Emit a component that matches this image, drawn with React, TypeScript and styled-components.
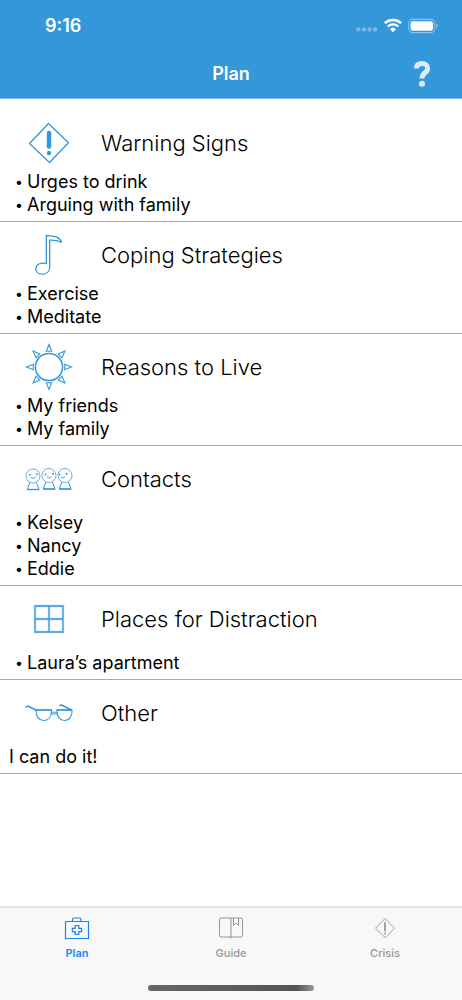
import React from "react";
import styled, { createGlobalStyle } from "styled-components";

const BLUE = "#3497da";

const GlobalStyle = createGlobalStyle`
  *, *::before, *::after { box-sizing: border-box; }
  body {
    margin: 0;
    background: #fff;
    color: #000;
    font-family: Inter, "Liberation Sans", sans-serif;
  }
`;

const Screen = styled.div`
  min-height: 100vh;
  display: flex;
  flex-direction: column;
`;

const TopBar = styled.header`
  background: ${BLUE};
  color: #fff;
  border-bottom: 1px solid #86b6d9;
`;

const StatusBar = styled.div`
  height: 50px;
  padding: 2px 24px 0 45px;
  display: flex;
  align-items: center;
  justify-content: space-between;
`;

const Clock = styled.time`
  font-size: 18px;
  line-height: 24px;
  font-weight: 600;
`;

const StatusIcons = styled.div`
  display: flex;
  align-items: center;
`;

const NavBar = styled.div`
  height: 48px;
  padding: 0 24px;
  display: grid;
  grid-template-columns: 1fr auto 1fr;
  align-items: center;
`;

const PageTitle = styled.h1`
  grid-column: 2;
  margin: 0;
  font-size: 18px;
  line-height: 24px;
  font-weight: 600;
`;

const HelpButton = styled.button`
  justify-self: end;
  width: 32px;
  height: 40px;
  padding: 0;
  display: flex;
  align-items: center;
  justify-content: center;
  border: 0;
  background: none;
  color: #dbebf8;
  cursor: pointer;
`;

const Sections = styled.main`
  flex: 1;
  padding-top: 11px;
`;

const Section = styled.section`
  padding: 9px 9px 5px;
  border-bottom: 1px solid #ababab;
`;

const SectionHeader = styled.div<{ $roomy?: boolean }>`
  display: flex;
  align-items: center;
  gap: 12px;
  margin-bottom: ${(p) => (p.$roomy ? 9 : 4)}px;
`;

const IconBox = styled.div`
  width: 80px;
  height: 48px;
  display: flex;
  align-items: center;
  justify-content: center;
`;

const SectionTitle = styled.h2`
  margin: 0;
  font-size: 22px;
  line-height: 32px;
  font-weight: 300;
`;

const Items = styled.ul`
  margin: 0;
  padding: 0 0 0 6px;
  display: grid;
  gap: 1px;
  list-style: none;
  font-size: 18px;
  line-height: 22px;
`;

const Item = styled.li`
  display: flex;
  gap: 4px;
  &::before {
    content: "•";
    width: 8px;
    font-size: 14px;
  }
`;

const Note = styled.p`
  margin: 0;
  font-size: 18px;
  line-height: 22px;
`;

const BottomBar = styled.footer`
  background: #f8f8f8;
  border-top: 2px solid #e6e6e6;
`;

const Tabs = styled.nav`
  display: grid;
  grid-template-columns: repeat(3, 1fr);
  height: 77px;
`;

const Tab = styled.a<{ $active?: boolean }>`
  padding-top: 8px;
  display: flex;
  flex-direction: column;
  align-items: center;
  gap: 5px;
  text-decoration: none;
  font-size: 11px;
  line-height: 16px;
  font-weight: ${(p) => (p.$active ? 600 : 500)};
  color: ${(p) => (p.$active ? "#1a85f7" : "#969696")};
`;

const HomeIndicator = styled.div`
  width: 36%;
  height: 6px;
  margin: 0 auto 9px;
  border-radius: 3px;
  background: linear-gradient(90deg, #666, #555 90%, #999);
`;

const Signal = () => (
  <svg width="22" height="16" viewBox="0 0 22 16" fill="#79b9e8">
    {[0, 1, 2, 3].map((i) => (
      <rect key={i} x={0.3 + i * 5.6} y="9.5" width="4" height="4" rx="1.4" />
    ))}
  </svg>
);

const Wifi = () => (
  <svg width="30" height="16" viewBox="0 0 30 16" fill="none" stroke="#fff" strokeWidth="2.3">
    <path d="M6.8 5.1a12.4 12.4 0 0 1 16.400 0" />
    <path d="M9.700 8.500a7.800 7.800 0 0 1 10.600 0" />
    <path d="M12 11.200a4.3 4.3 0 0 1 6 0L15 14.300z" fill="#fff" stroke="none" />
  </svg>
);

const Battery = () => (
  <svg width="30" height="16" viewBox="0 0 30 16">
    <rect x="0.8" y="1.4" width="26" height="13.2" rx="4" fill="none" stroke="#8bc3ec" strokeWidth="1.1" />
    <rect x="2.6" y="3.2" width="22.4" height="9.6" rx="2.4" fill="#fff" />
    <path d="M28.2 5.6q1.6 1 1.6 2.4t-1.6 2.4z" fill="#8bc3ec" />
  </svg>
);

const Question = () => (
  <svg width="18" height="28" viewBox="0 0 18 28" fill="none">
    <path d="M3.3 8.6C3.3 5.200 5.600 3.600 9 3.600s5.700 1.700 5.700 4.800C14.700 12.700 9 12.500 9 18.600" stroke="currentColor" strokeWidth="5" />
    <circle cx="9" cy="23.700" r="3" fill="currentColor" />
  </svg>
);

const WarningIcon = () => (
  <svg width="42" height="42" viewBox="0 0 42 42" fill="none" stroke={BLUE} strokeLinejoin="round">
    <path d="M20.500 1.500L40.500 20.800L21.500 40.500L1.500 21.500z" strokeWidth="1.3" />
    <path d="M21 11v13.500" strokeWidth="4.400" strokeLinecap="round" />
    <circle cx="21" cy="31" r="2.200" fill={BLUE} stroke="none" />
  </svg>
);

const NoteIcon = () => (
  <svg width="42" height="42" viewBox="0 0 42 42" fill="none" stroke={BLUE} strokeWidth="1.300" strokeLinejoin="round">
    <path d="M18.300 29.600V1.500C23 2.300 31.500 1.200 33.500 8.400C29.500 6 25.500 6.200 21.700 6V33C21.700 37.500 18.500 40.200 14.300 40.200S7.800 37.800 7.800 34.700C7.800 30.800 12.500 27.800 18.300 29.600z" />
  </svg>
);

const SunIcon = () => (
  <svg width="48" height="48" viewBox="0 0 48 48" fill="none" stroke={BLUE}>
    <circle cx="24" cy="24" r="13.600" strokeWidth="1.500" />
    {[0, 45, 90, 135, 180, 225, 270, 315].map((a) => (
      <path key={a} d="M24 1.500L26.700 8.300H21.300z" strokeWidth="1.100" transform={`rotate(${a} 24 24)`} />
    ))}
  </svg>
);

const PeopleIcon = () => (
  <svg width="48" height="24" viewBox="0 0 48 24" fill="none" stroke={BLUE} strokeWidth="1">
    {[0, 1, 2].map((i) => (
      <g key={i} transform={`translate(${i * 16} ${i === 0 ? 0.5 : 0})`}>
        <circle cx="8" cy="8.500" r="7" strokeOpacity=".75" />
        <path d="M4.800 15L2.300 22H14L11.500 15" />
        <path d="M2.300 22H14" strokeWidth="1.400" />
        <g transform={`translate(${i === 2 ? -2.5 : 0} 0)`}>
          <circle cx={i === 1 ? 4.500 : 5} cy="7.500" r=".9" fill={BLUE} stroke="none" />
          <circle cx="12" cy="6.800" r="1" fill={BLUE} stroke="none" />
          <path d="M6 9.500q2.500 3 4.500-.2" />
        </g>
      </g>
    ))}
  </svg>
);

const WindowIcon = () => (
  <svg width="32" height="30" viewBox="0 0 32 30" fill="none">
    <path d="M2 2H30V28H2zM16 2V28M2 15H30" stroke="#d3eafb" strokeWidth="3" />
    <path d="M2 2H30V28H2zM16 2V28M2 15H30" stroke={BLUE} strokeWidth="1.300" />
  </svg>
);

const GlassesIcon = () => (
  <svg width="48" height="20" viewBox="0 0 48 20" fill="none" stroke={BLUE} strokeWidth="1.100" strokeLinecap="round" strokeLinejoin="round">
    <path d="M1 4L2.500 3L10.500 6.800M46.500 7L36.500 2L35 2.500" strokeWidth="1.500" />
    <path d="M11 7H26.500V9C26 14 23 17.500 19 17.500C14 17.500 11 13.500 11 7z" />
    <path d="M32 7H47C47.500 13 44.500 17.500 39.500 17.500C35 17.500 32 14 32 7z" />
    <path d="M10.500 7H26.500M32 7H46.500" strokeWidth="1.600" />
    <path d="M26.500 9.300H32M26.500 11H32" />
  </svg>
);

const KitIcon = () => (
  <svg width="26" height="24" viewBox="0 0 26 24" fill="none" stroke="currentColor" strokeWidth="1.200">
    <path d="M1.500 5.500H24.500V22.500H1.500zM8.500 5.500V3.500Q8.500 2 10 2H15.500Q17 2 17 3.500V5.500" />
    <path d="M11.200 9.500H14.800V12.300H17.600V15.700H14.800V18.500H11.200V15.700H8.400V12.300H11.200z" />
  </svg>
);

const BookIcon = () => (
  <svg width="26" height="24" viewBox="0 0 26 24" fill="none" stroke="currentColor" strokeWidth="1">
    <rect x="1.500" y="2" width="23" height="19" rx="1.500" />
    <path d="M13 2V22.500M15.500 2V9.500L18 7L20.500 9.500V2" />
  </svg>
);

const CrisisIcon = () => (
  <svg width="26" height="24" viewBox="0 0 26 24" fill="none" stroke="currentColor">
    <path d="M13 2.500L22.500 12.200L13.200 21.700L3.500 12.200z" strokeWidth=".9" />
    <path d="M13 7V14.500" strokeWidth="1.800" strokeLinecap="round" />
    <circle cx="13" cy="17.500" r="1" fill="currentColor" stroke="none" />
  </svg>
);

type Entry = { title: string; icon: React.ReactNode; items?: string[]; note?: string; roomy?: boolean };

const plan: Entry[] = [
  { title: "Warning Signs", icon: <WarningIcon />, items: ["Urges to drink", "Arguing with family"] },
  { title: "Coping Strategies", icon: <NoteIcon />, items: ["Exercise", "Meditate"] },
  { title: "Reasons to Live", icon: <SunIcon />, items: ["My friends", "My family"] },
  { title: "Contacts", icon: <PeopleIcon />, items: ["Kelsey", "Nancy", "Eddie"], roomy: true },
  { title: "Places for Distraction", icon: <WindowIcon />, items: ["Laura’s apartment"], roomy: true },
  { title: "Other", icon: <GlassesIcon />, note: "I can do it!", roomy: true },
];

export default function App() {
  return (
    <Screen>
      <GlobalStyle />
      <TopBar>
        <StatusBar>
          <Clock>9:16</Clock>
          <StatusIcons>
            <Signal />
            <Wifi />
            <Battery />
          </StatusIcons>
        </StatusBar>
        <NavBar>
          <PageTitle>Plan</PageTitle>
          <HelpButton aria-label="Help">
            <Question />
          </HelpButton>
        </NavBar>
      </TopBar>
      <Sections>
        {plan.map((s) => (
          <Section key={s.title}>
            <SectionHeader $roomy={s.roomy}>
              <IconBox>{s.icon}</IconBox>
              <SectionTitle>{s.title}</SectionTitle>
            </SectionHeader>
            {s.items && (
              <Items>
                {s.items.map((item) => (
                  <Item key={item}>{item}</Item>
                ))}
              </Items>
            )}
            {s.note && <Note>{s.note}</Note>}
          </Section>
        ))}
      </Sections>
      <BottomBar>
        <Tabs>
          <Tab href="#plan" $active aria-current="page">
            <KitIcon />
            Plan
          </Tab>
          <Tab href="#guide">
            <BookIcon />
            Guide
          </Tab>
          <Tab href="#crisis">
            <CrisisIcon />
            Crisis
          </Tab>
        </Tabs>
        <HomeIndicator />
      </BottomBar>
    </Screen>
  );
}
